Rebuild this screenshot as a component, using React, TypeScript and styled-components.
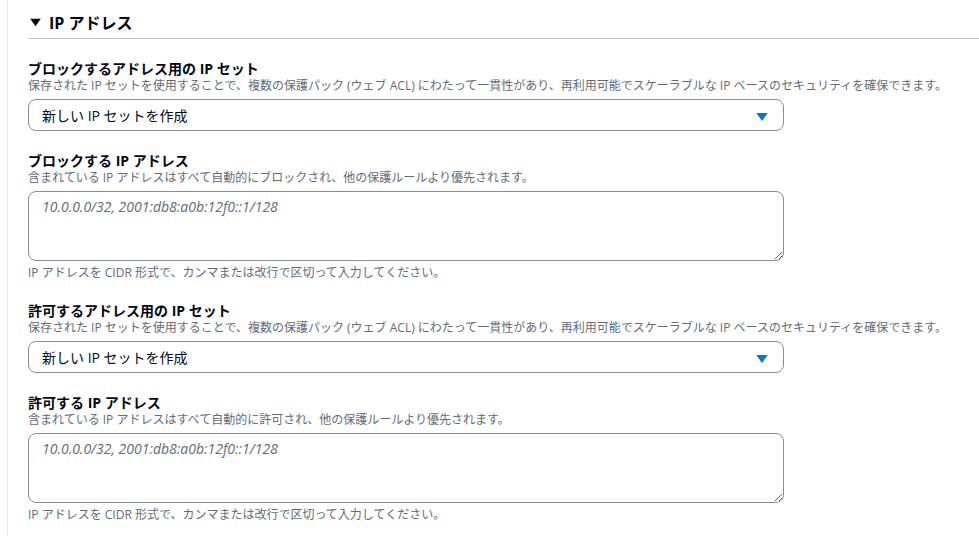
import React from 'react';
import styled, { createGlobalStyle } from 'styled-components';

const GlobalStyle = createGlobalStyle`
  html, body {
    margin: 0;
    padding: 0;
    background: #ffffff;
  }
  body {
    font-family: "Open Sans", "Noto Sans CJK JP", sans-serif;
    color: #000716;
  }
`;

const Page = styled.div`
  padding-left: 7px;
  height: 536px;
  overflow: hidden;
`;

const Panel = styled.div`
  border-left: 1px solid #e9ebed;
  padding-left: 20px;
  height: 100%;
  box-sizing: border-box;
`;

const Header = styled.div`
  display: flex;
  align-items: flex-start;
  gap: 7px;
  height: 39px;
  padding-left: 1px;
  padding-top: 13px;
  box-sizing: border-box;
  border-bottom: 1px solid #c6c6cd;
  font-size: 16px;
  font-weight: 700;
  line-height: 20px;
`;

const Fields = styled.div`
  display: flex;
  flex-direction: column;
  gap: 21px;
  padding-top: 21px;
`;

const Field = styled.div`
  display: flex;
  flex-direction: column;
`;

const Label = styled.div`
  font-size: 14px;
  font-weight: 700;
  line-height: 18px;
`;

const Description = styled.div`
  font-size: 12px;
  line-height: 16px;
  color: #5f6b7a;
  margin-bottom: 5px;
`;

const Constraint = styled.div`
  font-size: 12px;
  line-height: 16px;
  color: #5f6b7a;
  margin-top: 4px;
`;

const SelectBox = styled.div`
  width: 756px;
  height: 32px;
  box-sizing: border-box;
  border: 1px solid #8c8c94;
  border-radius: 8px;
  display: flex;
  align-items: center;
  justify-content: space-between;
  padding: 0 14px 0 13px;
  font-size: 14px;
`;

const TextArea = styled.textarea`
  width: 756px;
  height: 70px;
  box-sizing: border-box;
  border: 1px solid #8c8c94;
  border-radius: 8px;
  padding: 4px 13px;
  font-family: "Open Sans", "Noto Sans CJK JP", sans-serif;
  font-size: 14px;
  line-height: 22px;
  color: #000716;
  resize: vertical;
  outline: none;
  display: block;

  &::placeholder {
    color: #5f6b7a;
    font-style: italic;
  }
`;

const CaretIcon = styled.svg`
  flex: none;
  margin-top: 3px;
`;

const Caret = ({ color, size }: { color: string; size: number }) => (
  <CaretIcon width={size} height={size} viewBox="0 0 16 16">
    <path d="M1.5 3.5h13L8 12.5z" fill={color} />
  </CaretIcon>
);

const setDesc =
  '保存された IP セットを使用することで、複数の保護パック (ウェブ ACL) にわたって一貫性があり、再利用可能でスケーラブルな IP ベースのセキュリティを確保できます。';

function IpSetField({ label }: { label: string }) {
  return (
    <Field>
      <Label>{label}</Label>
      <Description>{setDesc}</Description>
      <SelectBox>
        <span>新しい IP セットを作成</span>
        <Caret color="#0972d3" size={14} />
      </SelectBox>
    </Field>
  );
}

function IpTextField({ label, desc }: { label: string; desc: string }) {
  return (
    <Field>
      <Label>{label}</Label>
      <Description>{desc}</Description>
      <TextArea placeholder="10.0.0.0/32, 2001:db8:a0b:12f0::1/128" />
      <Constraint>IP アドレスを CIDR 形式で、カンマまたは改行で区切って入力してください。</Constraint>
    </Field>
  );
}

export default function App() {
  return (
    <>
      <GlobalStyle />
      <Page>
        <Panel>
          <Header>
            <Caret color="#000716" size={13} />
            IP アドレス
          </Header>
          <Fields>
            <IpSetField label="ブロックするアドレス用の IP セット" />
            <IpTextField
              label="ブロックする IP アドレス"
              desc="含まれている IP アドレスはすべて自動的にブロックされ、他の保護ルールより優先されます。"
            />
            <IpSetField label="許可するアドレス用の IP セット" />
            <IpTextField
              label="許可する IP アドレス"
              desc="含まれている IP アドレスはすべて自動的に許可され、他の保護ルールより優先されます。"
            />
          </Fields>
        </Panel>
      </Page>
    </>
  );
}
